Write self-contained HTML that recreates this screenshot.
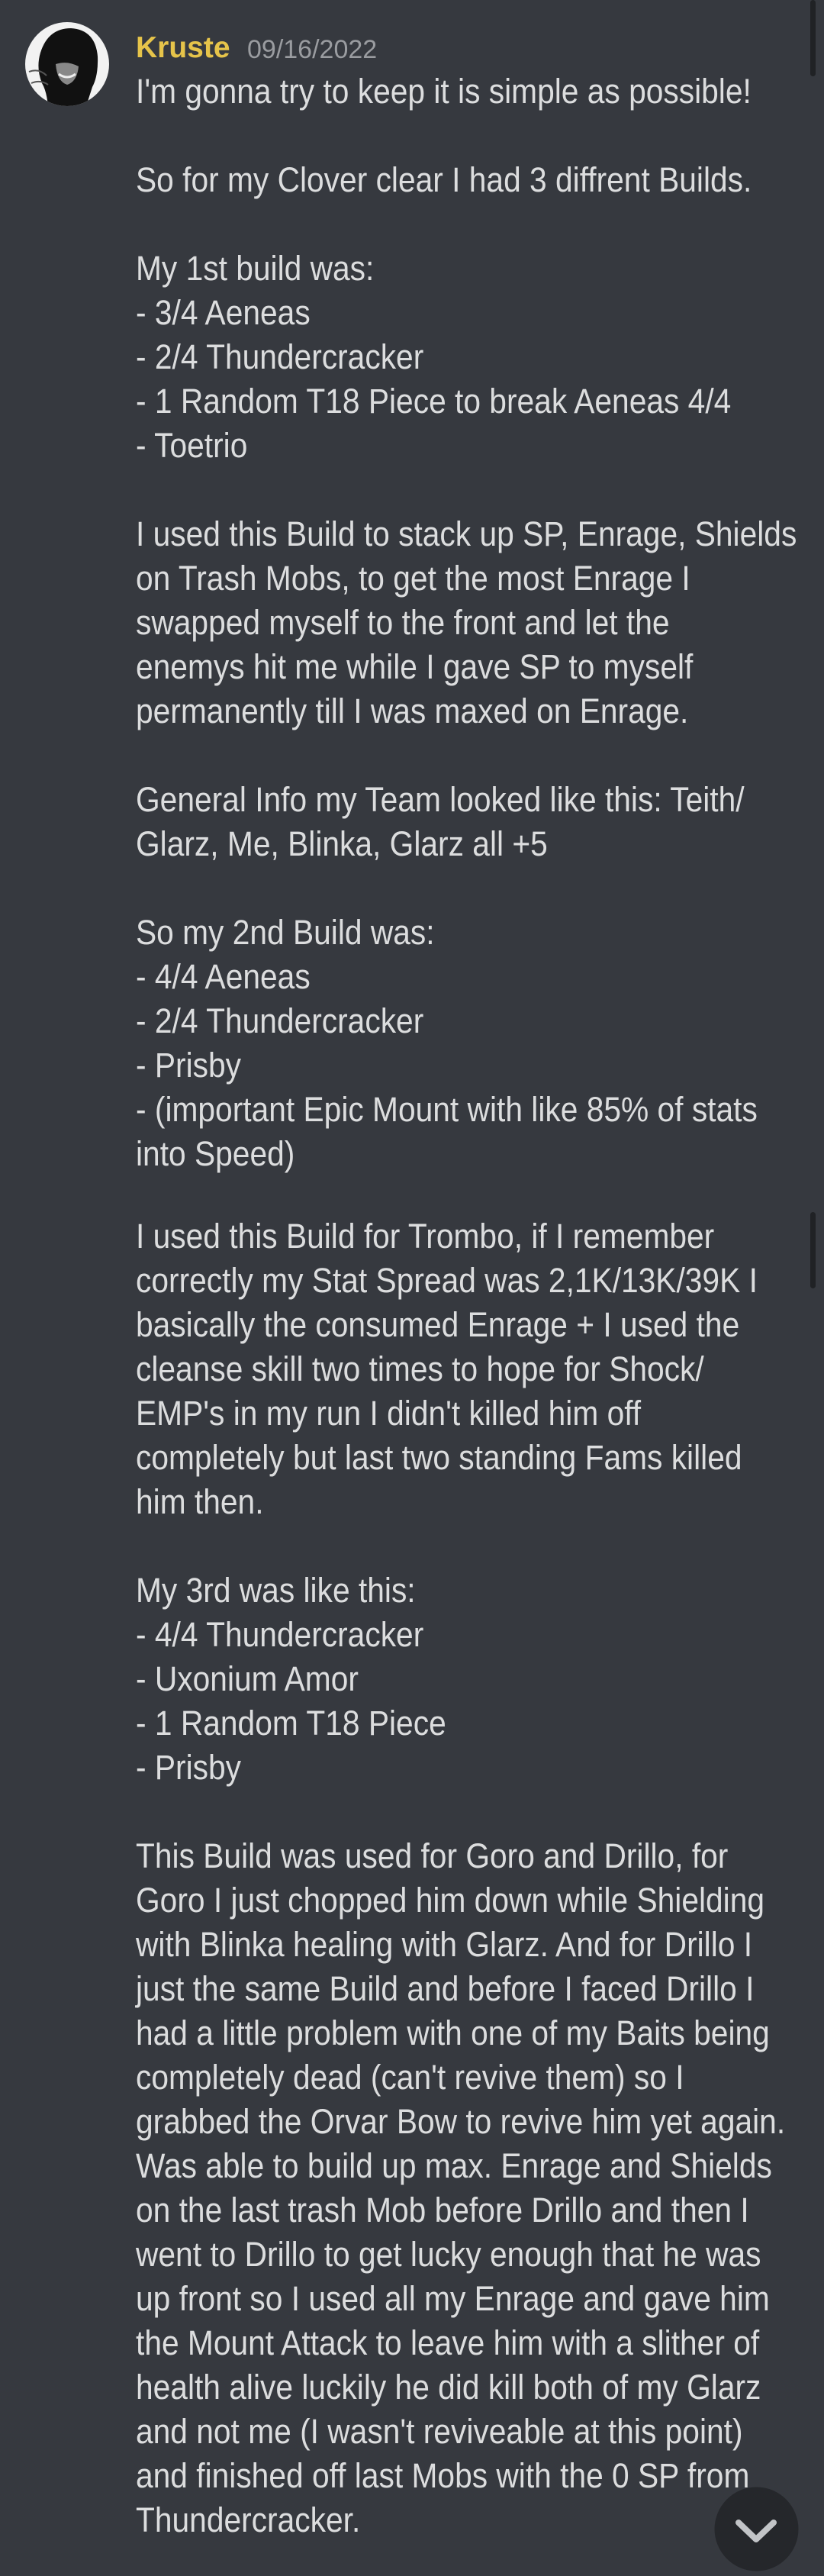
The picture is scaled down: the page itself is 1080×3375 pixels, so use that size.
<!DOCTYPE html>
<html><head><meta charset="utf-8"><style>
html,body{margin:0;padding:0;background:#36393f;}
body{width:1080px;height:3375px;position:relative;overflow:hidden;font-family:"Liberation Sans",sans-serif;}
.t{position:absolute;left:178px;height:58px;line-height:58px;font-size:45px;color:#dcddde;white-space:nowrap;transform:scaleX(0.905);transform-origin:0 50%;}
.sb{position:absolute;left:1062px;width:7px;border-radius:4px;background:#202225;}
</style></head><body>
<div class="sb" style="top:0;height:100px"></div>
<div class="sb" style="top:1588px;height:100px"></div>
<svg style="position:absolute;left:33px;top:29px" width="110" height="110" viewBox="0 0 110 110">
<defs><clipPath id="c"><circle cx="55" cy="55" r="55"/></clipPath></defs>
<g clip-path="url(#c)">
<rect width="110" height="110" fill="#f2f2f2"/>
<path d="M20 40 Q30 8 60 8 Q92 10 95 45 Q96 70 88 85 L80 110 L30 110 Q28 90 22 80 Q14 60 20 40Z" fill="#111"/>
<path d="M40 55 Q55 50 70 58 Q68 78 55 82 Q42 78 40 55Z" fill="#888"/>
<path d="M44 68 Q55 76 66 68" stroke="#eee" stroke-width="3" fill="none"/>
<path d="M5 65 Q18 60 28 70 M8 80 Q20 75 30 82" stroke="#555" stroke-width="2" fill="none"/>
</g></svg>
<div style="position:absolute;left:178px;top:38px;height:50px;line-height:50px;font-size:39px;font-weight:bold;color:#e6c44a">Kruste</div>
<div style="position:absolute;left:324px;top:40px;height:50px;line-height:50px;font-size:34px;color:#9a9ca0">09/16/2022</div>
<div class="t" style="top:91px">I'm gonna try to keep it is simple as possible!</div>
<div class="t" style="top:207px">So for my Clover clear I had 3 diffrent Builds.</div>
<div class="t" style="top:323px">My 1st build was:</div>
<div class="t" style="top:381px">- 3/4 Aeneas</div>
<div class="t" style="top:439px">- 2/4 Thundercracker</div>
<div class="t" style="top:497px">- 1 Random T18 Piece to break Aeneas 4/4</div>
<div class="t" style="top:555px">- Toetrio</div>
<div class="t" style="top:671px">I used this Build to stack up SP, Enrage, Shields</div>
<div class="t" style="top:729px">on Trash Mobs, to get the most Enrage I</div>
<div class="t" style="top:787px">swapped myself to the front and let the</div>
<div class="t" style="top:845px">enemys hit me while I gave SP to myself</div>
<div class="t" style="top:903px">permanently till I was maxed on Enrage.</div>
<div class="t" style="top:1019px">General Info my Team looked like this: Teith/</div>
<div class="t" style="top:1077px">Glarz, Me, Blinka, Glarz all +5</div>
<div class="t" style="top:1193px">So my 2nd Build was:</div>
<div class="t" style="top:1251px">- 4/4 Aeneas</div>
<div class="t" style="top:1309px">- 2/4 Thundercracker</div>
<div class="t" style="top:1367px">- Prisby</div>
<div class="t" style="top:1425px">- (important Epic Mount with like 85% of stats</div>
<div class="t" style="top:1483px">into Speed)</div>
<div class="t" style="top:1591px">I used this Build for Trombo, if I remember</div>
<div class="t" style="top:1649px">correctly my Stat Spread was 2,1K/13K/39K I</div>
<div class="t" style="top:1707px">basically the consumed Enrage + I used the</div>
<div class="t" style="top:1765px">cleanse skill two times to hope for Shock/</div>
<div class="t" style="top:1823px">EMP's in my run I didn't killed him off</div>
<div class="t" style="top:1881px">completely but last two standing Fams killed</div>
<div class="t" style="top:1939px">him then.</div>
<div class="t" style="top:2055px">My 3rd was like this:</div>
<div class="t" style="top:2113px">- 4/4 Thundercracker</div>
<div class="t" style="top:2171px">- Uxonium Amor</div>
<div class="t" style="top:2229px">- 1 Random T18 Piece</div>
<div class="t" style="top:2287px">- Prisby</div>
<div class="t" style="top:2403px">This Build was used for Goro and Drillo, for</div>
<div class="t" style="top:2461px">Goro I just chopped him down while Shielding</div>
<div class="t" style="top:2519px">with Blinka healing with Glarz. And for Drillo I</div>
<div class="t" style="top:2577px">just the same Build and before I faced Drillo I</div>
<div class="t" style="top:2635px">had a little problem with one of my Baits being</div>
<div class="t" style="top:2693px">completely dead (can't revive them) so I</div>
<div class="t" style="top:2751px">grabbed the Orvar Bow to revive him yet again.</div>
<div class="t" style="top:2809px">Was able to build up max. Enrage and Shields</div>
<div class="t" style="top:2867px">on the last trash Mob before Drillo and then I</div>
<div class="t" style="top:2925px">went to Drillo to get lucky enough that he was</div>
<div class="t" style="top:2983px">up front so I used all my Enrage and gave him</div>
<div class="t" style="top:3041px">the Mount Attack to leave him with a slither of</div>
<div class="t" style="top:3099px">health alive luckily he did kill both of my Glarz</div>
<div class="t" style="top:3157px">and not me (I wasn't reviveable at this point)</div>
<div class="t" style="top:3215px">and finished off last Mobs with the 0 SP from</div>
<div class="t" style="top:3273px">Thundercracker.</div>
<svg style="position:absolute;left:936px;top:3258px" width="111" height="111" viewBox="0 0 111 111">
<circle cx="55.5" cy="55.5" r="55" fill="#25272b"/>
<path d="M32 47 L55 69 L78 47" stroke="#c2c4c7" stroke-width="8" fill="none" stroke-linecap="round" stroke-linejoin="round"/>
</svg>
</body></html>
